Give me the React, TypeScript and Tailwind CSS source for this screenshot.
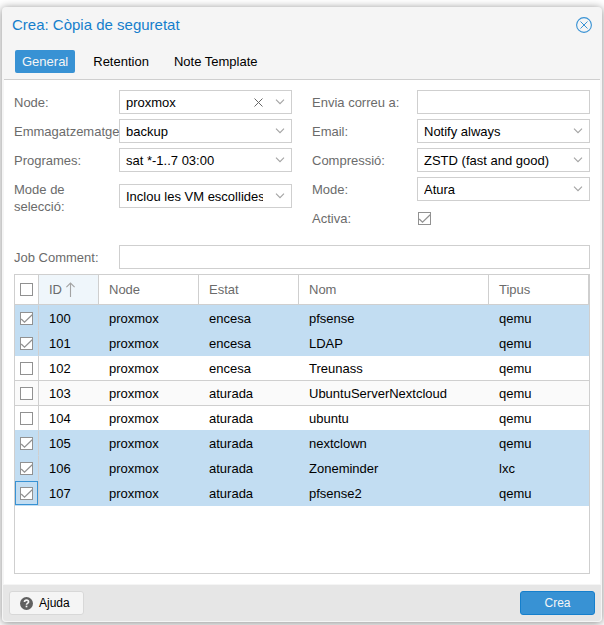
import React, { useId, useState } from "react";

type Guest = { id: number; node: string; status: string; name: string; type: string };

const guests: Guest[] = [
  { id: 100, node: "proxmox", status: "encesa", name: "pfsense", type: "qemu" },
  { id: 101, node: "proxmox", status: "encesa", name: "LDAP", type: "qemu" },
  { id: 102, node: "proxmox", status: "encesa", name: "Treunass", type: "qemu" },
  { id: 103, node: "proxmox", status: "aturada", name: "UbuntuServerNextcloud", type: "qemu" },
  { id: 104, node: "proxmox", status: "aturada", name: "ubuntu", type: "qemu" },
  { id: 105, node: "proxmox", status: "aturada", name: "nextclown", type: "qemu" },
  { id: 106, node: "proxmox", status: "aturada", name: "Zoneminder", type: "lxc" },
  { id: 107, node: "proxmox", status: "aturada", name: "pfsense2", type: "qemu" },
];

const tabs = ["General", "Retention", "Note Template"];

function TickBox({
  id,
  label,
  checked,
  onChange,
}: {
  id?: string;
  label?: string;
  checked: boolean;
  onChange: (checked: boolean) => void;
}) {
  return (
    <span className="grid size-[13px]">
      <input
        id={id}
        type="checkbox"
        aria-label={label}
        checked={checked}
        onChange={(e) => onChange(e.target.checked)}
        className="peer col-start-1 row-start-1 size-[13px] appearance-none border border-[#919191] bg-white outline-none"
      />
      <svg
        viewBox="0 0 13 13"
        className="pointer-events-none invisible col-start-1 row-start-1 size-[13px] peer-checked:visible"
        fill="none"
        stroke="#919191"
        strokeWidth="1.2"
      >
        <path d="M1.2 7 4.500 10.200 12.200 2.700" />
      </svg>
    </span>
  );
}

function Row({ label, id, children }: { label: string; id: string; children: React.ReactNode }) {
  return (
    <div className="flex min-h-6 items-center">
      <label htmlFor={id} className="w-[105px] shrink-0 self-start pt-1 pr-[5px] leading-[17px] text-[#6b6b6b]">
        {label}
      </label>
      {children}
    </div>
  );
}

function TextField({ label }: { label: string }) {
  const id = useId();
  return (
    <Row label={label} id={id}>
      <input id={id} type="text" className="h-6 min-w-0 flex-1 border border-[#cfcfcf] bg-white px-1.5 outline-none" />
    </Row>
  );
}

function SelectField({ label, value, clearable }: { label: string; value: string; clearable?: boolean }) {
  const id = useId();
  return (
    <Row label={label} id={id}>
      <div className="relative min-w-0 flex-1">
        <select
          id={id}
          defaultValue={value}
          className="block h-6 w-full appearance-none border border-[#cfcfcf] bg-white pt-0.5 pr-7 pl-1.5 outline-none"
        >
          <option>{value}</option>
        </select>
        {clearable && (
          <button type="button" aria-label="Esborra" className="absolute top-1 right-[26px] grid size-4 place-items-center">
            <svg viewBox="0 0 9 9" className="size-[9px]" stroke="#666" strokeWidth="1">
              <path d="M.5.5l8 8M8.5.5l-8 8" />
            </svg>
          </button>
        )}
        <svg
          viewBox="0 0 10 6"
          className="pointer-events-none absolute top-[9px] right-[7px] h-1.5 w-2.5"
          fill="none"
          stroke="#a3a3a3"
          strokeWidth="1.1"
        >
          <path d="M1 .6 5 4.600 9 .6" />
        </svg>
      </div>
    </Row>
  );
}

export default function App() {
  const [tab, setTab] = useState("General");
  const [active, setActive] = useState(true);
  const [selected, setSelected] = useState<number[]>([100, 101, 105, 106, 107]);
  const [focused, setFocused] = useState(107);
  const activeId = useId();

  const toggle = (id: number, on: boolean) => {
    setFocused(id);
    setSelected((ids) => (on ? [...ids, id] : ids.filter((x) => x !== id)));
  };

  return (
    <div className="flex min-h-screen flex-col bg-white px-0.5 pt-[7px] pb-[3px] font-['Liberation_Sans',Arial,sans-serif] text-[13px] text-black">
      <div
        role="dialog"
        aria-labelledby="window-title"
        className="flex flex-1 flex-col rounded bg-[#f5f5f5] shadow-[0_1px_8px_#888]"
      >
        <header className="flex items-center justify-between pt-2 pr-2.5 pl-2.5">
          <h1 id="window-title" className="text-[15px] leading-5 text-[#157fcc]">
            Crea: Còpia de seguretat
          </h1>
          <button type="button" aria-label="Tanca" className="text-[#3892d4]">
            <svg viewBox="0 0 16 16" className="size-4" fill="none" stroke="currentColor">
              <circle cx="8" cy="8" r="7.4" strokeWidth="1.1" />
              <path d="M4.5 4.5l7 7M11.5 4.5l-7 7" />
            </svg>
          </button>
        </header>

        <nav role="tablist" className="mx-0.5 flex gap-[11px] border-b border-[#cfcfcf] px-[11px] pt-[15px] pb-1.5">
          {tabs.map((name) => (
            <button
              key={name}
              type="button"
              role="tab"
              aria-selected={tab === name}
              onClick={() => setTab(name)}
              className={
                tab === name
                  ? "h-[23px] rounded-xs bg-[#3892d4] px-[7px] text-[#f5f5f5]"
                  : "h-[23px] rounded-xs px-[7px] text-black"
              }
            >
              {name}
            </button>
          ))}
        </nav>

        <main className="mx-0.5 flex flex-1 flex-col bg-white p-2.5">
          <div className="grid grid-cols-2 gap-5">
            <div className="flex flex-col gap-[5px]">
              <SelectField label="Node:" value="proxmox" clearable />
              <SelectField label="Emmagatzematge:" value="backup" />
              <SelectField label="Programes:" value="sat *-1..7 03:00" />
              <SelectField label="Mode de selecció:" value="Inclou les VM escollides" />
            </div>
            <div className="flex flex-col gap-[5px]">
              <TextField label="Envia correu a:" />
              <SelectField label="Email:" value="Notify always" />
              <SelectField label="Compressió:" value="ZSTD (fast and good)" />
              <SelectField label="Mode:" value="Atura" />
              <Row label="Activa:" id={activeId}>
                <div className="px-px">
                  <TickBox id={activeId} checked={active} onChange={setActive} />
                </div>
              </Row>
            </div>
          </div>

          <div className="mt-[15px]">
            <TextField label="Job Comment:" />
          </div>

          <div className="mt-[5px] flex-1 border border-[#cfcfcf]">
            <table className="w-full table-fixed border-separate border-spacing-0 text-left">
              <colgroup>
                <col className="w-6" />
                <col className="w-[60px]" />
                <col className="w-[100px]" />
                <col className="w-[100px]" />
                <col />
                <col className="w-[100px]" />
              </colgroup>
              <thead>
                <tr className="h-[30px] text-[#6b6b6b] *:border-r *:border-b *:border-[#cfcfcf] *:font-normal">
                  <th className="pl-[5px]">
                    <TickBox
                      label="Selecciona-ho tot"
                      checked={selected.length === guests.length}
                      onChange={(on) => setSelected(on ? guests.map((g) => g.id) : [])}
                    />
                  </th>
                  <th aria-sort="ascending" className="bg-[#eff6fb] pl-2.5">
                    <span className="flex items-center gap-1">
                      ID
                      <svg viewBox="0 0 10 15" className="h-[15px] w-2.5" fill="none" stroke="#a3a3a3" strokeWidth="1.1">
                        <path d="M4.500 15V1M.4 5.100 4.500 1l4.100 4.100" />
                      </svg>
                    </span>
                  </th>
                  <th className="pl-2.5">Node</th>
                  <th className="pl-2.5">Estat</th>
                  <th className="pl-2.5">Nom</th>
                  <th className="pl-2.5">Tipus</th>
                </tr>
              </thead>
              <tbody>
                {guests.map((g, i) => {
                  const on = selected.includes(g.id);
                  const above = i > 0 && selected.includes(guests[i - 1].id);
                  const line = on || above || i === 0 ? "*:border-t-[#c2ddf2]" : "*:border-t-[#cfcfcf]";
                  const fill = on ? "bg-[#c2ddf2]" : i % 2 ? "bg-[#fafafa]" : "bg-white";
                  return (
                    <tr
                      key={g.id}
                      className={`h-[25px] *:border-t *:pt-px last:h-[26px] last:*:border-b last:*:border-b-[#c2ddf2] ${line} ${fill}`}
                    >
                      <td
                        className={
                          focused === g.id
                            ? "border-r border-r-[#cfcfcf] pl-[5px] shadow-[inset_0_0_0_1px_#3892d4]"
                            : "border-r border-r-[#cfcfcf] pl-[5px]"
                        }
                      >
                        <TickBox label={`Selecciona ${g.id}`} checked={on} onChange={(v) => toggle(g.id, v)} />
                      </td>
                      <td className="pl-2.5">{g.id}</td>
                      <td className="pl-2.5">{g.node}</td>
                      <td className="pl-2.5">{g.status}</td>
                      <td className="pl-2.5">{g.name}</td>
                      <td className="pl-2.5">{g.type}</td>
                    </tr>
                  );
                })}
              </tbody>
            </table>
          </div>
        </main>

        <footer className="flex justify-between rounded-b border border-[#f5f5f5] bg-[#e6e6e6] p-1.5 text-[12px]">
          <button
            type="button"
            className="flex h-6 w-[75px] items-center gap-1.5 rounded-[3px] border border-[#d8d8d8] bg-[#f5f5f5] pl-2.5"
          >
            <svg viewBox="0 0 12 12" className="size-[13px]" fill="none">
              <circle cx="6" cy="6" r="6" fill="#606060" />
              <path d="M4.1 4.6C4.2 3.4 5 2.9 6 2.9s1.9.6 1.9 1.6C7.900 5.600 6 5.700 6 7.200" stroke="#f5f5f5" strokeWidth="1.5" />
              <path d="M5.200 8h1.600v1.500H5.200z" fill="#f5f5f5" />
            </svg>
            Ajuda
          </button>
          <button type="button" className="h-6 w-[75px] rounded-[3px] border border-[#157fcc] bg-[#3892d4] text-[#f5f5f5]">
            Crea
          </button>
        </footer>
      </div>
    </div>
  );
}
